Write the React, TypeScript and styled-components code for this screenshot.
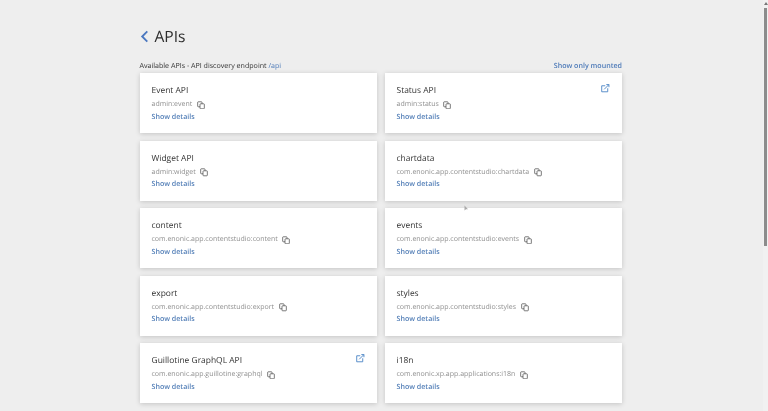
import styled, { createGlobalStyle } from "styled-components"

const GlobalStyle = createGlobalStyle`
    html, body {
        margin: 0;
        height: 100%;
        overflow: hidden;
        background: #eeeeee;
    }
    body {
        font-family: "Open Sans", "Liberation Sans", sans-serif;
        text-rendering: geometricPrecision;
    }
`

const Page = styled.div`
    height: 411px;
    box-sizing: border-box;
    padding: 24px 146px 0 139.5px;
    overflow: hidden;
    background: #eeeeee;
    filter: blur(0.3px);
`

const Heading = styled.div`
    display: flex;
    align-items: center;
    gap: 6px;
    height: 25px;
`

const BackIcon = styled.svg`
    width: 9px;
    height: 13px;
    color: #4b78c0;
`

const Title = styled.h1`
    margin: 0;
    font-size: 15.6px;
    font-weight: 400;
    line-height: 25px;
    color: #2d2d2d;
`

const InfoRow = styled.div`
    display: flex;
    justify-content: space-between;
    align-items: center;
    height: 12px;
    margin-top: 11px;
    font-size: 7.1px;
    color: #333333;
`

const Link = styled.span`
    color: #4d7ab8;
`

const BoldLink = styled.span`
    color: #4d7ab8;
    font-weight: 600;
`

const Grid = styled.div`
    display: grid;
    grid-template-columns: 237.5px 237.5px;
    column-gap: 7.5px;
    row-gap: 7.5px;
    margin-top: 1px;
`

const Card = styled.div`
    position: relative;
    height: 60px;
    box-sizing: border-box;
    padding: 11px 12px 0;
    background: #ffffff;
    box-shadow: 0 1px 5px rgba(0, 0, 0, 0.18);
`

const CardName = styled.div`
    font-size: 8.45px;
    line-height: 13px;
    color: #333333;
`

const CardKey = styled.div`
    display: flex;
    align-items: center;
    gap: 4.5px;
    margin-top: 1px;
    font-size: 7px;
    line-height: 13px;
    color: #8f8f8f;
`

const CopyIcon = styled.svg`
    width: 8px;
    height: 8.5px;
    margin-top: 1px;
    color: #3a3a3a;
`

const Details = styled.div`
    margin-top: -0.5px;
    font-size: 7.1px;
    font-weight: 600;
    line-height: 12px;
    color: #5580b8;
`

const OpenIcon = styled.svg`
    position: absolute;
    top: 11px;
    right: 12.5px;
    width: 8.5px;
    height: 8.5px;
    color: #4d86c6;
`

const ScrollTrack = styled.div`
    position: absolute;
    top: 0;
    right: 0;
    width: 5px;
    height: 411px;
    background: #f1f1f1;
`

const ScrollArrow = styled.div`
    width: 0;
    height: 0;
    margin: 2px auto 0;
    border-left: 2px solid transparent;
    border-right: 2px solid transparent;
    border-bottom: 3px solid #777777;
`

const ScrollThumb = styled.div`
    width: 3.5px;
    height: 238px;
    margin: 3px 0 0 0.5px;
    background: #8c8c8c;
`

const Cursor = styled.svg`
    position: absolute;
    top: 205px;
    left: 464px;
    width: 5px;
    height: 7px;
`

type Api = { name: string; id: string; open?: boolean }

const apis: Api[] = [
    { name: "Event API", id: "admin:event" },
    { name: "Status API", id: "admin:status", open: true },
    { name: "Widget API", id: "admin:widget" },
    { name: "chartdata", id: "com.enonic.app.contentstudio:chartdata" },
    { name: "content", id: "com.enonic.app.contentstudio:content" },
    { name: "events", id: "com.enonic.app.contentstudio:events" },
    { name: "export", id: "com.enonic.app.contentstudio:export" },
    { name: "styles", id: "com.enonic.app.contentstudio:styles" },
    { name: "Guillotine GraphQL API", id: "com.enonic.app.guillotine:graphql", open: true },
    { name: "i18n", id: "com.enonic.xp.app.applications:i18n" },
]

export default function App() {
    return (
        <Page>
            <GlobalStyle />
            <Heading>
                <BackIcon viewBox="0 0 9 14" fill="none" stroke="currentColor" strokeWidth="2">
                    <path d="M7.5 1.5 L2 7 L7.5 12.5" />
                </BackIcon>
                <Title>APIs</Title>
            </Heading>
            <InfoRow>
                <span>Available APIs - API discovery endpoint <Link>/api</Link></span>
                <BoldLink>Show only mounted</BoldLink>
            </InfoRow>
            <Grid>
                {apis.map((api) => (
                    <Card key={api.id}>
                        <CardName>{api.name}</CardName>
                        <CardKey>
                            {api.id}
                            <CopyIcon viewBox="0 0 12 12" fill="#fff" stroke="currentColor" strokeWidth="1">
                                <rect x="1" y="0.8" width="6.5" height="7.5" rx="1" />
                                <rect x="4.5" y="3.8" width="6.5" height="7.5" rx="1" />
                            </CopyIcon>
                        </CardKey>
                        <Details>Show details</Details>
                        {api.open && (
                            <OpenIcon viewBox="0 0 12 12" fill="none" stroke="currentColor" strokeWidth="1.3">
                                <path d="M6 2.5 H1 V11 H9.5 V6" />
                                <path d="M4.5 7.5 L11 1 M7.5 0.8 H11.2 V4.5" />
                            </OpenIcon>
                        )}
                    </Card>
                ))}
            </Grid>
            <ScrollTrack>
                <ScrollArrow />
                <ScrollThumb />
            </ScrollTrack>
            <Cursor viewBox="0 0 5 7">
                <path d="M0.5 0.5 L0.5 5.5 L2 4.3 L4 4.3 Z" fill="#aaaaaa" />
            </Cursor>
        </Page>
    )
}
